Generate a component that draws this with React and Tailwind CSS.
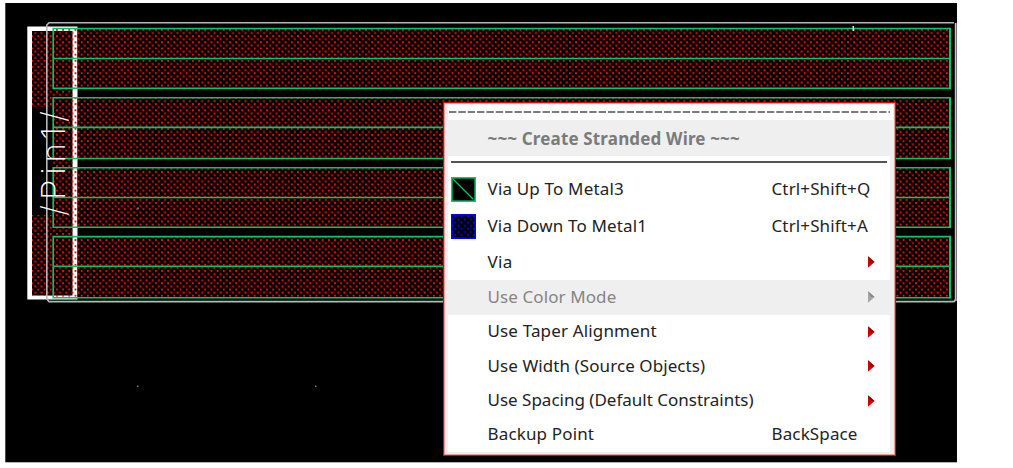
const strands = [
  { top: 28.5, mid: 58.5, bottom: 88.3 },
  { top: 97.7, mid: 127.4, bottom: 158.5 },
  { top: 167.7, mid: 197.5, bottom: 227.3 },
  { top: 236.6, mid: 266.3, bottom: 297.7 },
];

function Layout() {
  return (
    <svg className="absolute inset-0" width="1013" height="468" viewBox="0 0 1013 468">
      <defs>
        <pattern id="dots" width="6.18" height="6.18" x="56" y="29" patternUnits="userSpaceOnUse">
          <rect x="0" y="0" width="1.9" height="1.9" fill="#ff0808" />
          <rect x="3.1" y="3.1" width="1.9" height="1.9" fill="#ff0808" />
        </pattern>
      </defs>
      <rect x="5.3" y="3" width="951.7" height="459.3" fill="#000" />
      <rect x="27.3" y="26.5" width="50.2" height="273" fill="#fff" />
      <rect x="32" y="31" width="40.5" height="264.5" fill="#000" />
      <path d="M32 31H53V107H32ZM32 215H53V295.5H32ZM53 89H72.5V97H53ZM53 159H72.5V167H53ZM53 228H72.5V236H53Z" fill="url(#dots)" />
      <path d="M955.7 23V301" stroke="#c3c3c9" strokeWidth="1.8" />
      <path d="M954 22.8H49L46.8 25V299L49 301.6H954L956 299" fill="none" stroke="#b7b7b7" strokeWidth="1.6" />
      {strands.map((s) => (
        <g key={s.top}>
          <rect x="77.5" y={s.top} width="873" height={s.bottom - s.top} fill="#000" />
          <rect x="53" y={s.top} width="897" height={s.bottom - s.top} fill="url(#dots)" />
          <path
            d={`M950 ${s.top}H53.2V${s.bottom}H950M53 ${s.mid}H950`}
            fill="none"
            stroke="#00c864"
            strokeWidth="1.6"
          />
          <path d={`M950 ${s.top - 0.8}V${s.bottom + 0.8}`} stroke="#00c864" strokeWidth="2" />
        </g>
      ))}
      <text
        transform="translate(64.5 216) rotate(-90)"
        textLength="105"
        lengthAdjust="spacing"
        fill="#fff"
        className="font-['Inter'] text-[33px] font-extralight"
      >
        /Pin1/
      </text>
      <path d="M852.5 26H854V31H852.5Z" fill="#ddd" />
      <g fill="#777">
        <rect x="137" y="207.5" width="2" height="1.5" />
        <rect x="137" y="385.5" width="1.5" height="1.5" />
        <rect x="315" y="385.5" width="1.5" height="1.5" />
      </g>
    </svg>
  );
}

function MetalUpIcon() {
  return (
    <svg width="25" height="25" viewBox="0 0 25 25">
      <rect x="0.8" y="0.8" width="23.4" height="23.4" fill="#000" stroke="#00d06a" strokeWidth="1.6" />
      <path d="M2 2 22 22" stroke="#00c864" strokeWidth="1.2" />
    </svg>
  );
}

function MetalDownIcon() {
  return (
    <svg width="25" height="25" viewBox="0 0 25 25">
      <defs>
        <pattern id="blueDots" width="6.2" height="6.2" x="3.5" y="1.5" patternUnits="userSpaceOnUse">
          <rect width="1.9" height="1.9" fill="#0000ff" />
          <rect x="3.1" y="3.1" width="1.9" height="1.9" fill="#0000ff" />
        </pattern>
      </defs>
      <rect width="25" height="25" fill="#000" />
      <rect width="25" height="25" fill="url(#blueDots)" />
      <rect x="0.8" y="0.8" width="23.4" height="23.4" fill="none" stroke="#0000ff" strokeWidth="1.8" />
    </svg>
  );
}

function Arrow({ muted }) {
  return (
    <svg width="7" height="12" viewBox="0 0 7 12">
      <path d="M0 0.3 6.6 6 0 11.7Z" fill={muted ? "#a5a5a5" : "#cc0000"} />
      <path d="M0 0.3 6.6 6H3Z" fill={muted ? "#858585" : "#950000"} />
    </svg>
  );
}

const items = [
  { label: "Via Up To Metal3", keys: "Ctrl+Shift+Q", icon: <MetalUpIcon />, size: "h-[38px]", spacing: "tracking-[0.18px]" },
  { label: "Via Down To Metal1", keys: "Ctrl+Shift+A", icon: <MetalDownIcon />, size: "h-[36px]", spacing: "tracking-[0.15px]" },
  { label: "Via", size: "h-[35px]", spacing: "tracking-[0.3px]" },
  { label: "Use Color Mode", muted: true, size: "h-[35px]", spacing: "tracking-[0.1px]" },
  { label: "Use Taper Alignment", size: "h-[34px]", spacing: "tracking-[0.15px]" },
  { label: "Use Width (Source Objects)", size: "h-[35px]", spacing: "tracking-[0.08px]" },
  { label: "Use Spacing (Default Constraints)", size: "h-[34px]", spacing: "tracking-normal" },
  { label: "Backup Point", keys: "BackSpace", size: "h-[34px]", spacing: "tracking-[0.15px]" },
];

function MenuItem({ label, keys, icon, muted, size, spacing }) {
  return (
    <li className={`flex items-center pl-[3px] ${size} ${muted ? "-mr-1 bg-[#efefef] text-[#858585]" : "text-[#222]"}`}>
      <span className="w-[36.5px] shrink-0">{icon}</span>
      <span className={`w-[284px] shrink-0 whitespace-nowrap pb-px ${spacing}`}>{label}</span>
      {keys ? (
        <span className="whitespace-nowrap pb-px tracking-[0.13px]">{keys}</span>
      ) : (
        <span className="ml-[96px]">
          <Arrow muted={muted} />
        </span>
      )}
    </li>
  );
}

function ContextMenu() {
  return (
    <div className="absolute left-[443px] top-[102px] h-[354px] w-[453px] border border-[#d40c0c]">
      <div className="flex h-full flex-col border border-[#f29a9a] bg-[#efefef] pb-[2px] pl-[3px] pr-1">
        <div className="flex grow flex-col bg-white">
          <div className="-mr-[3px] h-4 shrink-0 bg-white pl-px pt-[7px]">
            <svg width="441" height="2" viewBox="0 0 441 2">
              <path d="M0 1H441" stroke="#4c554f" strokeWidth="1.5" strokeDasharray="7.4 1.95" />
            </svg>
          </div>
          <div className="-mr-1 flex h-9 shrink-0 items-center bg-[#efefef] pl-[39.5px] pt-px font-bold tracking-[0.16px] text-[#7b7b7b]">
            ~~~ Create Stranded Wire ~~~
          </div>
          <div className="mb-[8px] ml-[3px] mr-[3px] mt-[5px] h-[1.5px] shrink-0 bg-[#505650]" />
          <ul>
            {items.map((item) => (
              <MenuItem key={item.label} {...item} />
            ))}
          </ul>
        </div>
      </div>
    </div>
  );
}

export default function App() {
  return (
    <main className="relative h-[468px] w-[1013px] overflow-hidden bg-white font-['Noto_Sans',sans-serif] text-[17px] leading-6">
      <Layout />
      <ContextMenu />
    </main>
  );
}
